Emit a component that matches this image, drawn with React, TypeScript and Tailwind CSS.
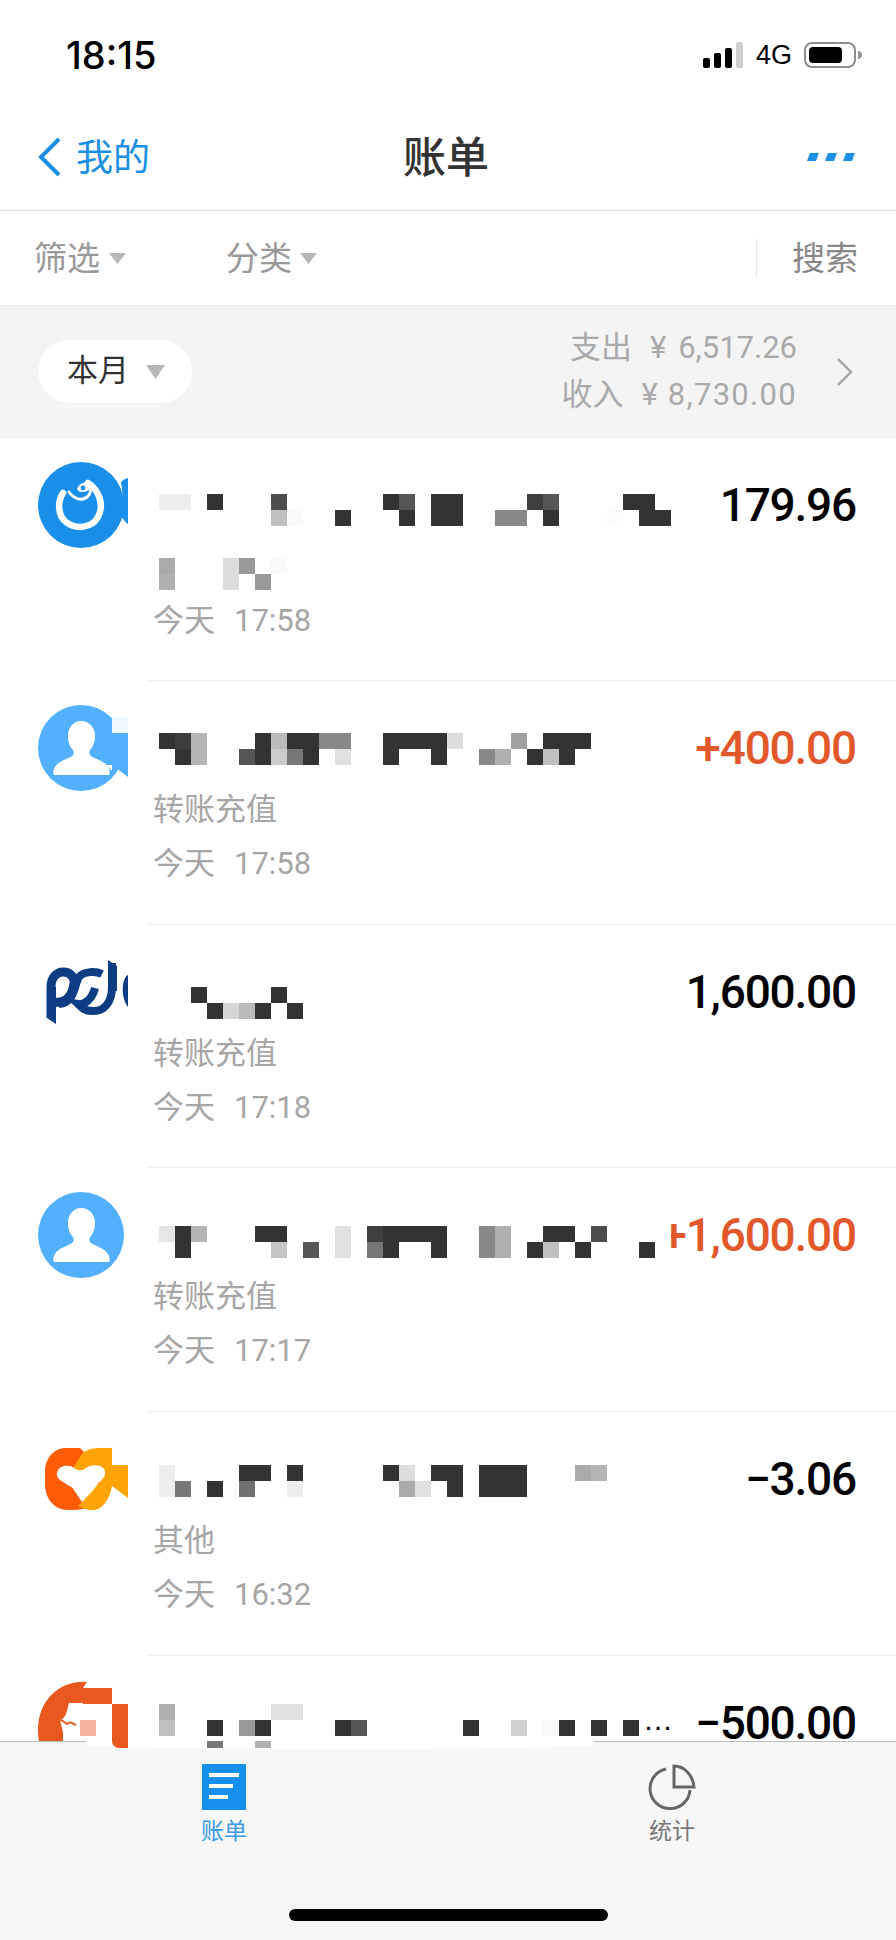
type Cell = [number, number, string, number?]

const D = "#333333"

function Mosaic({ cells, cols = 32, rows = 2 }: { cells: Cell[]; cols?: number; rows?: number }) {
  return (
    <svg width={cols * 16} height={rows * 16} shapeRendering="crispEdges" className="block shrink-0">
      {cells.map(([k, r, c], i) => (
        <rect key={i} x={k * 16} y={r * 16} width={16} height={16} fill={c} />
      ))}
    </svg>
  )
}

function Triangle({ w, h }: { w: number; h: number }) {
  return (
    <svg width={w} height={h} viewBox="0 0 10 10" preserveAspectRatio="none" className="block">
      <polygon points="0,0 10,0 5,10" fill="#b8b8b8" />
    </svg>
  )
}

function Person() {
  return (
    <path
      d="M43 16c-8 0-13 7-13 15 0 6 2 11 5 14 1 2 1 5-1 6-4 3-14 5-17 11-2 3-2 7-1 8h55c1-1 1-5-1-8-3-6-13-8-17-11-2-1-2-4-1-6 3-3 5-8 5-14 0-8-5-15-14-15z"
      fill="#ffffff"
    />
  )
}

function AvatarFish() {
  return (
    <svg width={90} height={90} viewBox="0 0 90 90" className="block">
      <circle cx="43" cy="43" r="43" fill="#1a8fe9" />
      <path d="M83 20c3-3 6-4 7-4v46c-2-1-5-5-7-8 2-8 2-24 0-34z" fill="#1a8fe9" />
      <path d="M25 31C19 40 20 54 28 60C38 68 54 66 60 55C67 42 60 27 50 21" fill="none" stroke="#fff" strokeWidth="6.5" strokeLinecap="round" />
      <path d="M31 30c3 5 9 8 14 7 5-1 9-6 7-13" fill="none" stroke="#fff" strokeWidth="3" strokeLinecap="round" />
      <ellipse cx="47" cy="25" rx="8" ry="4.5" transform="rotate(-20 47 25)" fill="#fff" />
      <circle cx="45" cy="26" r="2.4" fill="#1a8fe9" />
    </svg>
  )
}

function AvatarPersonCut() {
  return (
    <svg width={90} height={90} viewBox="0 0 90 90" className="block">
      <circle cx="43" cy="43" r="43" fill="#52b0ff" />
      <rect x="74" y="12" width="16" height="16" fill="#f0f7fe" />
      <polygon points="74,28 90,28 90,72 74,60" fill="#52b0ff" />
      <Person />
      <polygon points="68,60 74,60 74,66" fill="#ffffff" />
    </svg>
  )
}

function AvatarPerson() {
  return (
    <svg width={90} height={90} viewBox="0 0 90 90" className="block">
      <circle cx="43" cy="43" r="43" fill="#52b0ff" />
      <Person />
    </svg>
  )
}

function AvatarBank() {
  return (
    <svg width={90} height={90} viewBox="0 0 90 90" className="block">
      <g fill="none" stroke="#0c3c84" strokeWidth="9">
        <path d="M13 69V38c0-11 7-15 12-15 8 0 12 6 11 12-2 12-8 20-20 18" />
        <path d="M64 25c-6-3-18-3-23 3-5 8-4 26-20 27" strokeWidth="8" />
        <path d="M74 14v24c0 14-7 25-20 24-7 0-10-3-14-7 6 1 14-4 17-16" strokeWidth="8" />
      </g>
      <polygon points="9,38 18,38 18,75 9,69" fill="#0c3c84" />
      <polygon points="70,11 79,17 79,42 70,42" fill="#0c3c84" />
      <path d="M90 26c-7 3-7 24 0 32z" fill="#0c3c84" />
    </svg>
  )
}

function AvatarHeart() {
  return (
    <svg width={90} height={90} viewBox="0 0 90 90" className="block">
      <path d="M28 12H42L50 20L30 45L48 72C42 74 36 74 30 74C16 74 7 62 7 48V36C7 22 16 12 28 12z" fill="#ff5a04" />
      <path d="M44 18C48 14 54 12 62 12H74V29H90V62L74 50L72 58C68 68 62 74 55 74C48 74 44 72 40 70C48 62 54 56 60 48L30 40Z" fill="#ffa406" />
      <path d="M19 37C20 29 32 28 36 32C40 35 44 35 48 32C53 28 66 28 67 36C68 42 60 48 52 52C47 54 44 55 42 54C38 54 31 50 25 46C21 43 18 41 19 37z" fill="#ffffff" />
    </svg>
  )
}

function AvatarOrange() {
  return (
    <svg width={90} height={90} viewBox="0 0 90 90" className="block">
      <path d="M49 2 C20 0 0 22 0 50 C0 60 2 68 5 75 H25 V52 L22 40 C29 38 29 29 31 23 H45 V8z" fill="#e8581f" />
      <rect x="45" y="8" width="29" height="16" fill="#e8581f" />
      <rect x="74" y="24" width="16" height="46" fill="#e8581f" />
      <rect x="42" y="40" width="16" height="16" fill="#f4b3a0" />
      <path d="M22 40c3 0 5 3 7 4 3-3 5-1 9 1" fill="none" stroke="#e8581f" strokeWidth="2" />
    </svg>
  )
}

const rows = [
  {
    avatar: <AvatarFish />,
    height: "h-[243px]",
    top: "mt-[56px]",
    amount: "179.96",
    color: "text-black",
    time: "17:58",
    cells: [
      [0, 0, "#eeeeee"], [1, 0, "#eeeeee"], [3, 0, D], [7, 0, "#4d4d4d"], [7, 1, "#c0c0c0"], [8, 1, "#fafafa"],
      [11, 1, D], [14, 0, D], [15, 0, "#555555"], [15, 1, D], [17, 0, D], [18, 0, D], [17, 1, D], [18, 1, D],
      [21, 1, "#888888"], [22, 1, "#888888"], [23, 0, "#3f3f3f"], [24, 0, "#555555"], [24, 1, D],
      [28, 1, "#fcfcfc"], [29, 0, D], [30, 0, D], [30, 1, D], [31, 1, D],
    ] as Cell[],
    second: [
      [0, 0, "#aaaaaa"], [0, 1, "#b0b0b0"], [4, 0, "#dcdcdc"], [4, 1, "#dcdcdc"], [5, 0, "#999999"], [6, 1, "#999999"], [7, 0, "#fafafa"],
    ] as Cell[],
  },
  {
    avatar: <AvatarPersonCut />,
    height: "h-[244px]",
    top: "mt-[52px]",
    amount: "+400.00",
    color: "text-[#e2582a]",
    sub: "转账充值",
    time: "17:58",
    cells: [
      [0, 0, D], [1, 0, "#3d3d3d"], [1, 1, D], [2, 0, "#b5b5b5"], [2, 1, "#b5b5b5"], [5, 1, "#555555"], [6, 0, D], [6, 1, D],
      [7, 0, "#bbbbbb"], [7, 1, "#cccccc"], [8, 0, D], [8, 1, "#777777"], [9, 0, D], [9, 1, D], [10, 0, "#888888"], [11, 0, "#888888"], [11, 1, "#e0e0e0"],
      [14, 0, D], [15, 0, D], [16, 0, D], [17, 0, D], [14, 1, D], [17, 1, D], [18, 0, "#dddddd"],
      [20, 1, "#888888"], [21, 1, "#b0b0b0"], [22, 0, "#a0a0a0"], [23, 1, D], [24, 0, D], [24, 1, "#c0c0c0"], [25, 0, D], [25, 1, D], [26, 0, D],
    ] as Cell[],
  },
  {
    avatar: <AvatarBank />,
    height: "h-[243px]",
    top: "mt-[62px]",
    amount: "1,600.00",
    color: "text-black",
    sub: "转账充值",
    time: "17:18",
    cells: [
      [2, 0, D], [3, 1, D], [4, 1, "#d5d5d5"], [5, 1, "#bbbbbb"], [6, 1, D], [7, 0, D], [8, 1, D],
    ] as Cell[],
  },
  {
    avatar: <AvatarPerson />,
    height: "h-[244px]",
    top: "mt-[58px]",
    amount: "+1,600.00",
    color: "text-[#e2582a]",
    sub: "转账充值",
    time: "17:17",
    overlap: true,
    cells: [
      [0, 0, "#e5e5e5"], [1, 0, D], [1, 1, D], [2, 0, "#b5b5b5"], [6, 0, D], [7, 0, D], [7, 1, "#c5c5c5"], [9, 1, "#555555"], [11, 0, "#e0e0e0"], [11, 1, "#e0e0e0"],
      [13, 0, "#3f3f3f"], [13, 1, "#777777"], [14, 0, D], [14, 1, D], [15, 0, D], [16, 0, D], [17, 0, D], [17, 1, D],
      [20, 0, "#888888"], [20, 1, "#888888"], [21, 0, "#b0b0b0"], [21, 1, "#b0b0b0"], [23, 1, D], [24, 0, D], [24, 1, "#c0c0c0"], [25, 0, D], [26, 1, D], [27, 0, "#4d4d4d"], [30, 1, D],
    ] as Cell[],
  },
  {
    avatar: <AvatarHeart />,
    height: "h-[244px]",
    top: "mt-[53px]",
    amount: "−3.06",
    color: "text-black",
    sub: "其他",
    time: "16:32",
    cells: [
      [0, 0, "#eeeeee"], [0, 1, "#eeeeee"], [1, 1, "#777777"], [3, 1, D], [5, 0, D], [5, 1, "#707070"], [6, 0, D], [8, 0, D], [8, 1, "#eeeeee"],
      [14, 0, D], [15, 0, "#dddddd"], [15, 1, "#aaaaaa"], [16, 1, "#e0e0e0"], [17, 0, D], [18, 0, D], [18, 1, D],
      [20, 0, D], [21, 0, D], [22, 0, D], [20, 1, D], [21, 1, D], [22, 1, D], [26, 0, "#aaaaaa"], [27, 0, "#b5b5b5"],
    ] as Cell[],
  },
  {
    avatar: <AvatarOrange />,
    height: "h-[244px]",
    top: "mt-[48px]",
    amount: "−500.00",
    color: "text-black",
    more: true,
    time: "",
    cells: [
      [0, 0, "#b0b0b0"], [0, 1, "#c0c0c0"], [7, 0, "#e0e0e0"], [8, 0, "#e0e0e0"], [3, 1, D], [5, 1, "#999999"], [6, 1, D], [11, 1, D], [12, 1, "#555555"],
      [19, 1, D], [22, 1, "#d0d0d0"], [24, 1, "#f8f8f8"], [25, 1, D], [27, 1, D], [29, 1, D],
    ] as Cell[],
  },
]

export default function App() {
  return (
    <div className="w-[896px] h-[1940px] bg-white flex flex-col overflow-hidden font-['Roboto','Noto_Sans_CJK_SC',sans-serif]">
      {/* status bar */}
      <div className="h-[86px] shrink-0 pt-[24px] pl-[66px] pr-[34px] flex items-center justify-between">
        <span className="text-[38px] font-medium text-black font-['Inter','Roboto',sans-serif]">18:15</span>
        <div className="flex items-center">
          <svg width="40" height="26" viewBox="0 0 40 26" className="block">
            <rect x="0" y="16" width="7" height="10" rx="2" fill="#000" />
            <rect x="11" y="11" width="7" height="15" rx="2" fill="#000" />
            <rect x="22" y="6" width="7" height="20" rx="2" fill="#000" />
            <rect x="33" y="0" width="7" height="26" rx="2" fill="#cfcfcf" />
          </svg>
          <span className="ml-[13px] text-[27px] leading-none text-black font-['Liberation_Sans',sans-serif]">4G</span>
          <svg width="58" height="26" viewBox="0 0 58 26" className="block ml-[12px]">
            <rect x="1" y="1" width="50" height="24" rx="7" fill="none" stroke="#8e8e8e" strokeWidth="2" />
            <rect x="5" y="5" width="33" height="16" rx="4" fill="#000" />
            <path d="M54 9c2 0 4 2 4 4s-2 4-4 4z" fill="#8e8e8e" />
          </svg>
        </div>
      </div>

      {/* nav */}
      <div className="h-[125px] shrink-0 pt-[18px] pl-[37px] pr-[41px] grid grid-cols-3 items-center border-b border-[#dddddd]">
        <div className="flex items-center text-[#1a8fe3]">
          <svg width="25" height="40" viewBox="0 0 25 40" className="block">
            <polyline points="22,2 4,20 22,38" fill="none" stroke="#1a8fe3" strokeWidth="4" />
          </svg>
          <span className="ml-[14px] mt-[3px] text-[37px] leading-none">我的</span>
        </div>
        <div className="mt-[3px] text-center text-[43px] leading-none text-[#333333] font-medium">账单</div>
        <div className="flex justify-end">
          <svg width="48" height="8" viewBox="0 0 48 8" className="block">
            <polygon points="3,0 12,0 9,8 0,8" fill="#1a8fe3" />
            <polygon points="21,0 30,0 27,8 18,8" fill="#1a8fe3" />
            <polygon points="39,0 48,0 45,8 36,8" fill="#1a8fe3" />
          </svg>
        </div>
      </div>

      {/* filters */}
      <div className="h-[95px] shrink-0 pl-[34px] pr-[38px] flex items-center border-b border-[#eeeeee] text-[33px] text-[#999999]">
        <div className="w-[192px] flex items-center gap-[9px]">
          <span className="mt-[2px]">筛选</span>
          <Triangle w={17} h={11} />
        </div>
        <div className="flex items-center gap-[8px]">
          <span className="mt-[2px]">分类</span>
          <Triangle w={17} h={11} />
        </div>
        <div className="ml-auto h-[38px] w-px bg-[#e6e6e6]" />
        <span className="ml-[35px] mt-[2px] text-[#888888]">搜索</span>
      </div>

      {/* month summary */}
      <div className="h-[132px] shrink-0 pl-[38px] pr-[43px] flex items-center bg-[#f4f4f4] border-b border-[#eeeeee]">
        <div className="w-[154px] h-[63px] rounded-full bg-white pl-[29px] flex items-center text-[31px] text-[#333333]">
          本月
          <span className="ml-[17px]">
            <Triangle w={19} h={14} />
          </span>
        </div>
        <div className="ml-auto text-right text-[31px] leading-[47px] text-[#aaaaaa]">
          <div className="-mt-[1px]">支出<span className="ml-[18px]">¥</span><span className="ml-[12px]">6,517.26</span></div>
          <div>收入<span className="ml-[18px]">¥</span><span className="ml-[10px] tracking-[1.3px]">8,730.00</span></div>
        </div>
        <svg width="17" height="30" viewBox="0 0 17 30" className="block ml-[39px]">
          <polyline points="2,2 15,15 2,28" fill="none" stroke="#aaaaaa" strokeWidth="2.5" />
        </svg>
      </div>

      {/* list */}
      <div className="flex-1 min-h-0 overflow-hidden">
        {rows.map((row, i) => (
          <div key={i} className={`flex ${row.height}`}>
            <div className="w-[148px] shrink-0 pl-[38px] pt-[24px]">{row.avatar}</div>
            <div className="flex-1 min-w-0 pl-[5px] pr-[40px] border-b border-[#eeeeee]">
              <div className="h-[102px] flex justify-between">
                <div className={`ml-[6px] h-[32px] flex items-end ${row.top} ${row.overlap ? "relative z-10 bg-white" : ""}`}>
                  <Mosaic cells={row.cells} cols={row.more ? 30 : 32} />
                  {row.more && <span className="ml-[4px] text-[30px] leading-[32px] text-black font-['Liberation_Sans',sans-serif]">…</span>}
                </div>
                <div className={`mt-[40px] h-[54px] whitespace-nowrap flex justify-end shrink-0 text-[46px] leading-[54px] tracking-[-1.2px] font-medium ${row.color} ${row.overlap ? "ml-[-200px]" : ""}`}>
                  {row.amount}
                </div>
              </div>
              <div className="h-[53px] flex items-center text-[31px] leading-none text-[#a6a6a6]">
                {row.second ? (
                  <div className="ml-[6px] mt-[15px]">
                    <Mosaic cells={row.second} cols={8} />
                  </div>
                ) : (
                  row.sub
                )}
              </div>
              {row.time && (
                <div className="h-[54px] flex items-center text-[31px] leading-none text-[#a6a6a6]">
                  今天<span className="ml-[19px]">{row.time}</span>
                </div>
              )}
            </div>
          </div>
        ))}
      </div>

      {/* tab bar */}
      <div className="relative h-[199px] shrink-0 bg-[#f7f7f7] border-t border-[#bdbdbd] flex">
        <div className="absolute left-[86px] top-[-1px] w-[508px] h-[8px] rounded-b-[50%] bg-white" />
        <div className="absolute left-[207px] top-[-1px] w-[16px] h-[7px] bg-[#777777]" />
        <div className="absolute left-[255px] top-[-1px] w-[16px] h-[7px] bg-[#b0b0b0]" />
        <div className="absolute left-[112px] top-[-1px] w-[16px] h-[7px] rounded-bl-[12px] bg-[#e8581f]" />
        <div className="flex-1 flex flex-col items-center pt-[22px]">
          <svg width="44" height="46" viewBox="0 0 44 46" className="block">
            <rect width="44" height="46" fill="#1590ee" />
            <rect x="7" y="9" width="30" height="4" fill="#ffffff" />
            <rect x="7" y="20" width="24" height="4" fill="#ffffff" />
            <rect x="7" y="31" width="19" height="4" fill="#ffffff" />
          </svg>
          <span className="mt-[7px] text-[23px] leading-[30px] text-[#3a9ae8]">账单</span>
        </div>
        <div className="flex-1 flex flex-col items-center pt-[22px]">
          <svg width="48" height="46" viewBox="0 0 48 46" className="block">
            <path d="M18 5A20 20 0 1 0 42 26" fill="none" stroke="#666666" strokeWidth="3" />
            <path d="M26 2C36 2 45 11 46 23H26z" fill="none" stroke="#666666" strokeWidth="3" />
          </svg>
          <span className="mt-[7px] text-[23px] leading-[30px] text-[#777777]">统计</span>
        </div>
        <div className="absolute left-[289px] top-[167px] w-[319px] h-[12px] rounded-full bg-black" />
      </div>
    </div>
  )
}
